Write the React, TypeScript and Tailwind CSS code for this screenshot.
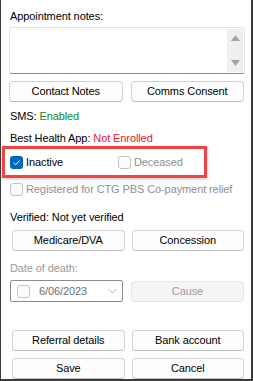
import type { ReactNode } from 'react';

const font = { fontFamily: '"Liberation Sans", Arial, sans-serif' };

function Btn({ children, disabled }: { children: ReactNode; disabled?: boolean }) {
  return (
    <button
      type="button"
      className={`h-[21px] flex-1 rounded-[4px] border text-[11px] font-normal leading-none tracking-[-0.1px] ${
        disabled
          ? 'border-[#e5e5e5] bg-[#f5f5f5] text-[#9d9d9d]'
          : 'border-[#d0d0d0] border-b-[#bdbdbd] bg-[#fdfdfd] text-black'
      }`}
    >
      {children}
    </button>
  );
}

function Box({ checked }: { checked?: boolean }) {
  if (checked) {
    return (
      <span className="flex h-[13px] w-[13px] shrink-0 items-center justify-center rounded-[3px] bg-[#0067c0]">
        <svg width="9" height="9" viewBox="0 0 9 9" fill="none">
          <path d="M1.5 4.8 L3.6 6.8 L7.5 2.4" stroke="white" strokeWidth="1" />
        </svg>
      </span>
    );
  }
  return <span className="h-[13px] w-[13px] shrink-0 rounded-[3px] border border-[#c4c4c4] bg-[#fbfbfb]" />;
}

export default function App() {
  return (
    <div
      style={font}
      className="flex h-[381px] w-[253px] flex-col whitespace-nowrap border-b-2 border-l border-r-2 border-[#3c3c3c] bg-white pl-[8px] pr-[7px] text-[11px] tracking-[-0.1px] text-black"
    >
      <div className="mt-[8px] h-[16px] pl-[1px] leading-[16px]">Appointment notes:</div>

      <div className="mt-[3px] flex h-[47px] w-[236px] rounded-[3px] border border-[#e3e3e3] border-b-[#8a8a8a] bg-white">
        <div className="flex-1" />
        <div className="my-[1px] mr-[1px] flex w-[16px] flex-col items-center justify-between bg-[#efefef] py-[6px]">
          <svg width="9" height="6" viewBox="0 0 9 6">
            <path d="M0 6 L4.5 0 L9 6 Z" fill="#a3a3a3" />
          </svg>
          <svg width="9" height="6" viewBox="0 0 9 6">
            <path d="M0 0 L4.5 6 L9 0 Z" fill="#a3a3a3" />
          </svg>
        </div>
      </div>

      <div className="mt-[7px] flex gap-[8px]">
        <Btn>Contact Notes</Btn>
        <Btn>Comms Consent</Btn>
      </div>

      <div className="mt-[6px] h-[16px] pl-[1px] leading-[16px]">
        SMS: <span className="text-[#128a12]">Enabled</span>
      </div>
      <div className="mt-[6px] h-[16px] pl-[1px] leading-[16px]">
        Best Health App: <span className="text-[#ee1133]">Not Enrolled</span>
      </div>

      <div className="-ml-[7px] flex h-[32px] w-[205px] items-center border-[3px] border-[#ef4444] pl-[5px] shadow-[0_1px_3px_rgba(0,0,0,0.25)]">
        <div className="flex w-[108px] items-center">
          <Box checked />
          <span className="ml-[3px]">Inactive</span>
        </div>
        <Box />
        <span className="ml-[3px] text-[#8f8f8f]">Deceased</span>
      </div>

      <div className="mt-[3px] flex h-[16px] items-center pl-[1px]">
        <Box />
        <span className="ml-[3px] text-[#8f8f8f]">Registered for CTG PBS Co-payment relief</span>
      </div>

      <div className="mt-[12px] h-[16px] pl-[1px] leading-[16px]">Verified: Not yet verified</div>

      <div className="mt-[5px] flex gap-[7px] pl-[3px]">
        <Btn>Medicare/DVA</Btn>
        <Btn>Concession</Btn>
      </div>

      <div className="mt-[9px] h-[16px] pl-[1px] leading-[16px] text-[#9a9a9a]">Date of death:</div>

      <div className="mt-[4px] flex gap-[8px] pl-[1px]">
        <div className="flex h-[22px] w-[113px] items-center rounded-[2px] border border-[#8c8c8c] pl-[6px] pr-[5px]">
          <Box />
          <span className="ml-[9px] flex-1 text-[#6e6e6e]">6/06/2023</span>
          <svg width="9" height="6" viewBox="0 0 9 6" fill="none">
            <path d="M0.5 1 L4.5 5 L8.5 1" stroke="#b5b5b5" strokeWidth="1" />
          </svg>
        </div>
        <div className="mt-[1px] flex flex-1">
          <Btn disabled>Cause</Btn>
        </div>
      </div>

      <div className="mt-[28px] flex gap-[7px] pl-[3px]">
        <Btn>Referral details</Btn>
        <Btn>Bank account</Btn>
      </div>
      <div className="mt-[7px] flex gap-[7px] pl-[3px]">
        <Btn>Save</Btn>
        <Btn>Cancel</Btn>
      </div>
    </div>
  );
}
